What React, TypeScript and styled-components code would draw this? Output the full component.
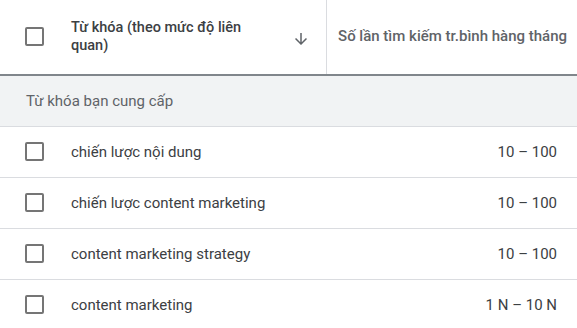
import styled, { createGlobalStyle } from 'styled-components';

const GlobalStyle = createGlobalStyle`
  html, body {
    margin: 0;
    padding: 0;
    background: #ffffff;
  }
  body {
    font-family: Roboto, "Noto Sans", "Liberation Sans", sans-serif;
    -webkit-font-smoothing: antialiased;
  }
`;

const rows = [
  { keyword: 'chiến lược nội dung', volume: '10 – 100' },
  { keyword: 'chiến lược content marketing', volume: '10 – 100' },
  { keyword: 'content marketing strategy', volume: '10 – 100' },
  { keyword: 'content marketing', volume: '1 N – 10 N' },
];

const Checkbox = () => <Box role="checkbox" aria-checked="false" />;

const DownArrow = () => (
  <svg width="18" height="18" viewBox="0 0 24 24" fill="#5f6368">
    <path d="M20 12l-1.41-1.41L13 16.17V4h-2v12.17l-5.58-5.59L4 12l8 8 8-8z" />
  </svg>
);

export default function App() {
  return (
    <Table>
      <GlobalStyle />
      <HeaderRow>
        <CheckCell>
          <Checkbox />
        </CheckCell>
        <KeywordHead>
          <HeadLabel>Từ khóa (theo mức độ liên quan)</HeadLabel>
          <SortIcon>
            <DownArrow />
          </SortIcon>
        </KeywordHead>
        <VolumeHead>Số lần tìm kiếm tr.bình hàng tháng</VolumeHead>
      </HeaderRow>
      <SectionRow>Từ khóa bạn cung cấp</SectionRow>
      {rows.map((r) => (
        <BodyRow key={r.keyword}>
          <CheckCell>
            <Checkbox />
          </CheckCell>
          <KeywordCell>{r.keyword}</KeywordCell>
          <VolumeCell>{r.volume}</VolumeCell>
        </BodyRow>
      ))}
    </Table>
  );
}

const Table = styled.div`
  width: 577px;
  height: 328px;
  overflow: hidden;
  background: #ffffff;
  color: #3c4043;
  font-size: 15px;
`;

const gridCols = `
  display: grid;
  grid-template-columns: 71px 256px 1fr;
`;

const HeaderRow = styled.div`
  ${gridCols}
  height: 74px;
  border-bottom: 2px solid #80868b;
`;

const CheckCell = styled.div`
  display: flex;
  align-items: center;
  padding-left: 25px;
`;

const Box = styled.div`
  width: 15px;
  height: 15px;
  border: 2px solid #757575;
  border-radius: 2px;
  margin-top: -1px;
`;

const KeywordHead = styled.div`
  display: flex;
  align-items: center;
  padding-right: 16px;
  border-right: 1px solid #dadce0;
`;

const HeadLabel = styled.div`
  flex: 1;
  font-size: 14.5px;
  font-weight: 500;
  line-height: 18px;
  color: #3c4043;
  padding-right: 20px;
`;

const SortIcon = styled.div`
  display: flex;
  margin-top: 4px;
`;

const VolumeHead = styled.div`
  display: flex;
  align-items: center;
  justify-content: flex-end;
  padding-right: 10px;
  font-weight: 500;
  color: #5f6368;
  white-space: nowrap;
  margin-top: -2px;
`;

const SectionRow = styled.div`
  display: flex;
  align-items: center;
  height: 50px;
  padding-left: 26px;
  background: #f1f3f4;
  border-bottom: 1px solid #dadce0;
  color: #5f6368;
`;

const BodyRow = styled.div`
  ${gridCols}
  height: 50px;
  border-bottom: 1px solid #dadce0;
`;

const KeywordCell = styled.div`
  display: flex;
  align-items: center;
  color: #3c4043;
`;

const VolumeCell = styled.div`
  display: flex;
  align-items: center;
  justify-content: flex-end;
  padding-right: 20px;
  color: #3c4043;
`;
